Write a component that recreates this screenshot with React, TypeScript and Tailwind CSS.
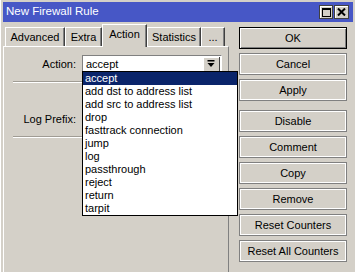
import React from 'react'

const actions = [
  'accept',
  'add dst to address list',
  'add src to address list',
  'drop',
  'fasttrack connection',
  'jump',
  'log',
  'passthrough',
  'reject',
  'return',
  'tarpit',
]

const tabs = [
  { label: 'Advanced', w: 'w-[60px]' },
  { label: 'Extra', w: 'w-[37px]' },
  { label: 'Action', w: 'w-[45px]', active: true },
  { label: 'Statistics', w: 'w-[54px]' },
  { label: '...', w: 'w-[24px]' },
]

function Button({ label, primary }: { label: string; primary?: boolean }) {
  return (
    <div
      className={
        primary
          ? 'h-[22px] w-[108px] flex items-center justify-center border border-black shadow-[inset_1px_1px_0_#fff,inset_-1px_-1px_0_#808080]'
          : 'h-[22px] w-[108px] flex items-center justify-center border border-[#808080] shadow-[inset_1px_1px_0_#fff,inset_-1px_-1px_0_#fff]'
      }
    >
      {label}
    </div>
  )
}

function Separator() {
  return (
    <div className="ml-[9px] mr-[6px] h-[2px] border-t border-[#a09c94] border-b border-b-white" />
  )
}

export default function App() {
  return (
    <div className="relative w-[355px] h-[272px] overflow-hidden bg-[#d4d0c8] text-[11px] leading-none text-black font-['Liberation_Sans',Arial,sans-serif] pt-[2px] px-[2px] border-l border-l-white">
      {/* Title bar */}
      <div className="h-[20px] bg-[#4757c6] flex items-center justify-between pl-[3px] pr-[4px]">
        <span className="text-white text-[11.5px]">New Firewall Rule</span>
        <div className="flex gap-[1px]">
          <div className="w-[14px] h-[14px] bg-[#d4d0c8] border border-[#404040] shadow-[inset_1px_1px_0_#fff] flex items-center justify-center">
            <div className="w-[9px] h-[9px] border border-black border-t-2" />
          </div>
          <div className="w-[15px] h-[14px] bg-[#d4d0c8] border border-[#404040] shadow-[inset_1px_1px_0_#fff] flex items-center justify-center">
            <svg width="9" height="8" viewBox="0 0 9 8">
              <path d="M1 0.5 L8 7.5 M8 0.5 L1 7.5" stroke="black" strokeWidth="2" />
            </svg>
          </div>
        </div>
      </div>

      <div className="flex">
        {/* Left: tabs + panel */}
        <div className="w-[226px] flex flex-col">
          <div className="flex items-end pl-[2px] pt-[2px] h-[24px] relative z-10">
            {tabs.map((t) =>
              t.active ? (
                <div
                  key={t.label}
                  className={`${t.w} h-[23px] -mb-[1px] bg-[#d4d0c8] border-t border-l border-white border-r border-r-[#404040] shadow-[inset_-1px_0_0_#808080] flex items-center justify-center pb-[3px]`}
                >
                  {t.label}
                </div>
              ) : (
                <div
                  key={t.label}
                  className={`${t.w} h-[19px] bg-[#d4d0c8] border-t border-l border-white border-r border-r-[#404040] shadow-[inset_-1px_0_0_#808080] flex items-center justify-center`}
                >
                  {t.label}
                </div>
              )
            )}
          </div>
          <div className="h-[230px] border-t border-l border-white border-r border-r-[#808080] pt-[8px]">
            <div className="flex items-center h-[18px]">
              <div className="w-[72px] text-right">Action:</div>
              <div className="ml-[6px] w-[140px] h-[18px] bg-white border-t border-l border-[#808080] border-b border-r border-b-white border-r-white flex items-center justify-between pl-[3px] pr-[1px]">
                <span>accept</span>
                <div className="w-[17px] h-[15px] bg-[#d4d0c8] border-r border-b border-[#404040] shadow-[inset_1px_1px_0_#fff] flex items-center justify-center">
                  <svg width="8" height="8" viewBox="0 0 8 8">
                    <rect x="0.5" y="0" width="7" height="1.5" fill="black" />
                    <path d="M0.5 3 H7.5 L4 7 Z" fill="black" />
                  </svg>
                </div>
              </div>
            </div>
            <div className="mt-[8px]">
              <Separator />
            </div>
            <div className="flex items-center h-[18px] mt-[27px]">
              <div className="w-[72px] text-right">Log Prefix:</div>
              <div className="ml-[6px] w-[140px] h-[18px] bg-white border-t border-l border-[#808080] border-b border-r border-b-white border-r-white" />
            </div>
            <div className="mt-[8px]">
              <Separator />
            </div>
          </div>
        </div>

        {/* Right: buttons */}
        <div className="ml-[10px] pt-[5px] flex flex-col gap-[4px]">
          <Button label="OK" primary />
          <Button label="Cancel" />
          <Button label="Apply" />
          <div className="mt-[5px] flex flex-col gap-[4px]">
            <Button label="Disable" />
            <Button label="Comment" />
            <Button label="Copy" />
            <Button label="Remove" />
            <Button label="Reset Counters" />
            <Button label="Reset All Counters" />
          </div>
        </div>
      </div>

      {/* Action dropdown list */}
      <div className="absolute left-[81px] top-[71px] w-[156px] bg-white border border-black z-20">
        {actions.map((a, i) => (
          <div
            key={a}
            className={
              i === 0
                ? 'h-[13px] flex items-center pl-[2px] bg-[#0a246a] text-white'
                : 'h-[13px] flex items-center pl-[2px]'
            }
          >
            {a}
          </div>
        ))}
      </div>
    </div>
  )
}
